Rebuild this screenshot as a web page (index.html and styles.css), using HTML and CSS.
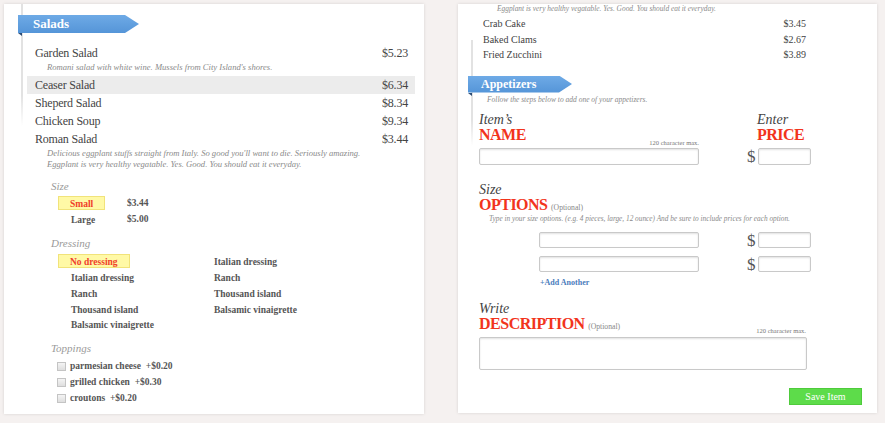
FILE: index.html
```html
<!DOCTYPE html>
<html>
<head>
<meta charset="utf-8">
<title>Menu editor</title>
<link rel="stylesheet" href="styles.css">
</head>
<body>
<div class="page">
  <section class="card card-left">
    <div class="rail rail-left"></div>
    <div class="ribbon ribbon-salads"><span class="ribbon-body">Salads</span></div>
    <div class="menu">
      <div class="row"><span>Garden Salad</span><span>$5.23</span></div>
      <p class="desc">Romani salad with white wine. Mussels from City Island's shores.</p>
      <div class="row active"><span>Ceaser Salad</span><span>$6.34</span></div>
      <div class="row"><span>Sheperd Salad</span><span>$8.34</span></div>
      <div class="row"><span>Chicken Soup</span><span>$9.34</span></div>
      <div class="row"><span>Roman Salad</span><span>$3.44</span></div>
      <p class="desc">Delicious eggplant stuffs straight from Italy. So good you'll want to die. Seriously amazing.<br>Eggplant is very healthy vegatable. Yes. Good. You should eat it everyday.</p>
    </div>
    <div class="opts">
      <h4 class="opt-label">Size</h4>
      <div class="size-row"><span class="opt-cell"><span class="opt sel">Small</span></span><span class="opt-price">$3.44</span></div>
      <div class="size-row"><span class="opt-cell"><span class="opt">Large</span></span><span class="opt-price">$5.00</span></div>
      <h4 class="opt-label label-dressing">Dressing</h4>
      <div class="dress">
        <div class="dress-col dress-col-a">
          <span class="opt sel">No dressing</span>
          <span class="opt">Italian dressing</span>
          <span class="opt">Ranch</span>
          <span class="opt">Thousand island</span>
          <span class="opt">Balsamic vinaigrette</span>
        </div>
        <div class="dress-col">
          <span class="opt plain">Italian dressing</span>
          <span class="opt plain">Ranch</span>
          <span class="opt plain">Thousand island</span>
          <span class="opt plain">Balsamic vinaigrette</span>
        </div>
      </div>
      <h4 class="opt-label label-toppings">Toppings</h4>
      <div class="tops">
        <div class="top"><span class="cb"></span><span>parmesian cheese&nbsp; +$0.20</span></div>
        <div class="top"><span class="cb"></span><span>grilled chicken&nbsp; +$0.30</span></div>
        <div class="top"><span class="cb"></span><span>croutons&nbsp; +$0.20</span></div>
      </div>
    </div>
  </section>

  <section class="card card-right">
    <div class="rail rail-right"></div>
    <p class="desc top-desc">Eggplant is very healthy vegatable. Yes. Good. You should eat it everyday.</p>
    <div class="mini-list">
      <div class="mini-row"><span>Crab Cake</span><span>$3.45</span></div>
      <div class="mini-row"><span>Baked Clams</span><span>$2.67</span></div>
      <div class="mini-row"><span>Fried Zucchini</span><span>$3.89</span></div>
    </div>
    <div class="ribbon ribbon-app"><span class="ribbon-body">Appetizers</span></div>
    <p class="desc follow">Follow the steps below to add one of your appetizers.</p>

    <div class="form">
      <div class="pair pair-name">
        <div class="cell-main">
          <div class="hd"><span class="hd-small">Item’s</span><span class="hd-big">NAME</span></div>
          <div class="count">120 character max.</div>
          <div class="field field-name"></div>
        </div>
        <div class="cell-price">
          <div class="hd hd-price"><span class="hd-small">Enter</span><span class="hd-big">PRICE</span></div>
          <div class="count-space"></div>
          <div class="money"><span class="dollar">$</span><span class="field field-price"></span></div>
        </div>
      </div>

      <div class="hd hd-size"><span class="hd-small">Size</span><span class="hd-big">OPTIONS <small class="optional">(Optional)</small></span></div>
      <p class="desc type-desc">Type in your size options. (e.g. 4 pieces, large, 12 ounce) And be sure to include prices for each option.</p>
      <div class="pair pair-size">
        <div class="cell-main"><span class="field field-size"></span></div>
        <div class="cell-price"><div class="money"><span class="dollar">$</span><span class="field field-price field-sm"></span></div></div>
      </div>
      <div class="pair pair-size pair-size2">
        <div class="cell-main"><span class="field field-size"></span></div>
        <div class="cell-price"><div class="money"><span class="dollar">$</span><span class="field field-price field-sm"></span></div></div>
      </div>
      <a class="add-another">+Add Another</a>

      <div class="hd hd-desc"><span class="hd-small">Write</span><span class="hd-big">DESCRIPTION <small class="optional">(Optional)</small></span></div>
      <div class="count count-desc">120 character max.</div>
      <div class="field field-area"></div>
      <div class="actions"><button class="save">Save Item</button></div>
    </div>
  </section>
</div>
</body>
</html>
```

FILE: styles.css
```css
* { box-sizing: border-box; }
html, body { margin: 0; padding: 0; }
body {
  background: #f5f1f0;
  font-family: "Liberation Serif", "Times New Roman", serif;
  color: #4a4a4a;
  width: 885px;
  height: 423px;
  overflow: hidden;
}
p, h4 { margin: 0; }

.page {
  display: flex;
  align-items: flex-start;
  gap: 34px;
  padding: 4px 0 0 4px;
}

.card {
  position: relative;
  background: #fff;
  box-shadow: 0 0 3px rgba(0, 0, 0, 0.13);
  overflow: hidden;
}
.card-left { width: 420px; height: 410px; }
.card-right { width: 419px; height: 409px; }

.rail {
  position: absolute;
  width: 2px;
  background: linear-gradient(#e2e2e2 75%, rgba(226, 226, 226, 0));
}
.rail-left { left: 17px; top: 0; height: 122px; }
.rail-right { left: 13px; top: 36px; height: 106px; }

/* ribbons */
.ribbon {
  position: relative;
  display: block;
}
.ribbon::after {
  content: "";
  position: absolute;
  left: 0;
  bottom: -3px;
  border-top: 3px solid #2b4b74;
  border-left: 4px solid transparent;
}
.ribbon-body {
  display: block;
  background: linear-gradient(#6eaae6, #5595d8);
  color: #fff;
  font-weight: bold;
}
.ribbon-salads { margin: 11px 0 0 14px; width: 121px; }
.ribbon-salads .ribbon-body {
  height: 18px;
  line-height: 18px;
  font-size: 13px;
  padding-left: 15px;
  clip-path: polygon(0 0, 107px 0, 121px 50%, 107px 100%, 0 100%);
}
.ribbon-app { margin: 13px 0 0 10px; width: 104px; }
.ribbon-app .ribbon-body {
  height: 17px;
  line-height: 17px;
  font-size: 12px;
  padding-left: 13px;
  clip-path: polygon(0 0, 91px 0, 104px 50%, 91px 100%, 0 100%);
}

/* left menu */
.menu { margin: 11px 9px 0 23px; }
.row {
  display: flex;
  justify-content: space-between;
  padding: 0 7px 0 8px;
  height: 18px;
  line-height: 18px;
  font-size: 12px;
  letter-spacing: -0.2px;
  color: #444;
}
.row.active { background: #ececec; }
.desc {
  font-style: italic;
  font-size: 8px;
  line-height: 11px;
  color: #8a8a8a;
}
.menu .desc { margin: 0 0 3px 20px; font-size: 8.6px; }
.menu .desc:last-child { margin-bottom: 0; }

.opts { margin-left: 47px; }
.opt-label {
  font-style: italic;
  font-weight: normal;
  font-size: 11px;
  line-height: 14px;
  color: #9a9a9a;
  margin: 8.5px 0 2px;
}
.label-dressing { margin: 9px 0 4px; }
.label-toppings { margin: 9px 0 3px; }

.size-row {
  display: flex;
  align-items: center;
  height: 16px;
  padding-left: 7px;
}
.opt-cell { width: 69px; display: flex; }
.opt {
  display: inline-block;
  height: 14px;
  line-height: 14px;
  padding: 0 12px;
  font-size: 9.5px;
  font-weight: bold;
  color: #555;
  border: 1px solid transparent;
}
.opt.sel {
  background: #fff9a6;
  border-color: #f1e37a;
  color: #f0402a;
  padding: 0 11px;
}
.opt-price {
  font-size: 9.5px;
  font-weight: bold;
  color: #555;
}

.dress { display: flex; padding-left: 7px; }
.dress-col { display: flex; flex-direction: column; align-items: flex-start; }
.dress-col-a { width: 155px; }
.dress-col .opt { margin: 0.875px 0; }
.dress-col .opt.plain { padding-left: 0; }

.tops { padding-left: 6px; }
.top {
  display: flex;
  align-items: center;
  gap: 4px;
  height: 16px;
  font-size: 9.5px;
  font-weight: bold;
  color: #555;
}
.cb {
  width: 9px;
  height: 9px;
  border: 1px solid #c4c4c4;
  background: linear-gradient(#f4f4f4, #dedede);
}

/* right card */
.top-desc { margin: -1px 0 0 39px; font-size: 7.4px; }
.mini-list { margin: 2px 0 0 25px; width: 323px; }
.mini-row {
  display: flex;
  justify-content: space-between;
  height: 15.5px;
  line-height: 15.5px;
  font-size: 10px;
  color: #3f3f3f;
}
.follow { margin: 1.5px 0 0 29px; font-size: 7.5px; }

.form { padding-left: 21px; }
.pair { display: flex; gap: 48px; }
.cell-main { width: 220px; }
.pair-name { margin-top: 7px; }

.hd { display: flex; flex-direction: column; }
.hd-small {
  font-style: italic;
  font-size: 14px;
  line-height: 15px;
  color: #444;
}
.hd-big {
  font-weight: bold;
  font-size: 16px;
  line-height: 15px;
  letter-spacing: -0.5px;
  color: #f2341c;
}
.hd-price { padding-left: 10px; }
.optional {
  font-weight: normal;
  font-size: 7.7px;
  line-height: 0;
  letter-spacing: 0;
  color: #888;
}

.count {
  font-size: 6.5px;
  line-height: 8px;
  color: #777;
  text-align: right;
  margin-top: -3px;
}
.count-space { height: 5px; }
.field {
  display: block;
  height: 17px;
  border: 1px solid #c9c9c9;
  border-radius: 2px;
  background: #fff;
  box-shadow: inset 0 1px 2px rgba(0, 0, 0, 0.12);
}
.field-name { margin-top: 1px; width: 220px; }
.money { display: flex; align-items: center; gap: 3px; }
.dollar {
  font-size: 17px;
  line-height: 17px;
  color: #555;
  width: 8px;
}
.field-price { width: 53px; }
.pair-name .money { margin-top: 1px; }

.hd-size { margin-top: 16.5px; }
.type-desc { margin: 1px 0 0 10px; font-size: 7.3px; }
.pair-size { margin-top: 8px; }
.pair-size2 { margin-top: 7px; }
.field-size { margin-left: 60px; width: 160px; height: 16px; }
.field-sm { height: 16px; }

.add-another {
  display: block;
  margin: 5px 0 0 61px;
  font-size: 8px;
  line-height: 10px;
  font-weight: bold;
  color: #4a7cbc;
}

.hd-desc { margin-top: 13.5px; }
.count-desc { width: 327px; margin-top: -4.5px; }
.field-area { width: 328px; height: 33px; margin-top: 2px; }

.actions { display: flex; justify-content: flex-end; padding-right: 15px; margin-top: 18px; }
.save {
  width: 73px;
  height: 17px;
  padding: 0;
  border: 1px solid #4fcb3c;
  background: #5ddc4a;
  color: #fff;
  font-family: "Liberation Serif", "Times New Roman", serif;
  font-size: 10px;
  line-height: 15px;
}
```
